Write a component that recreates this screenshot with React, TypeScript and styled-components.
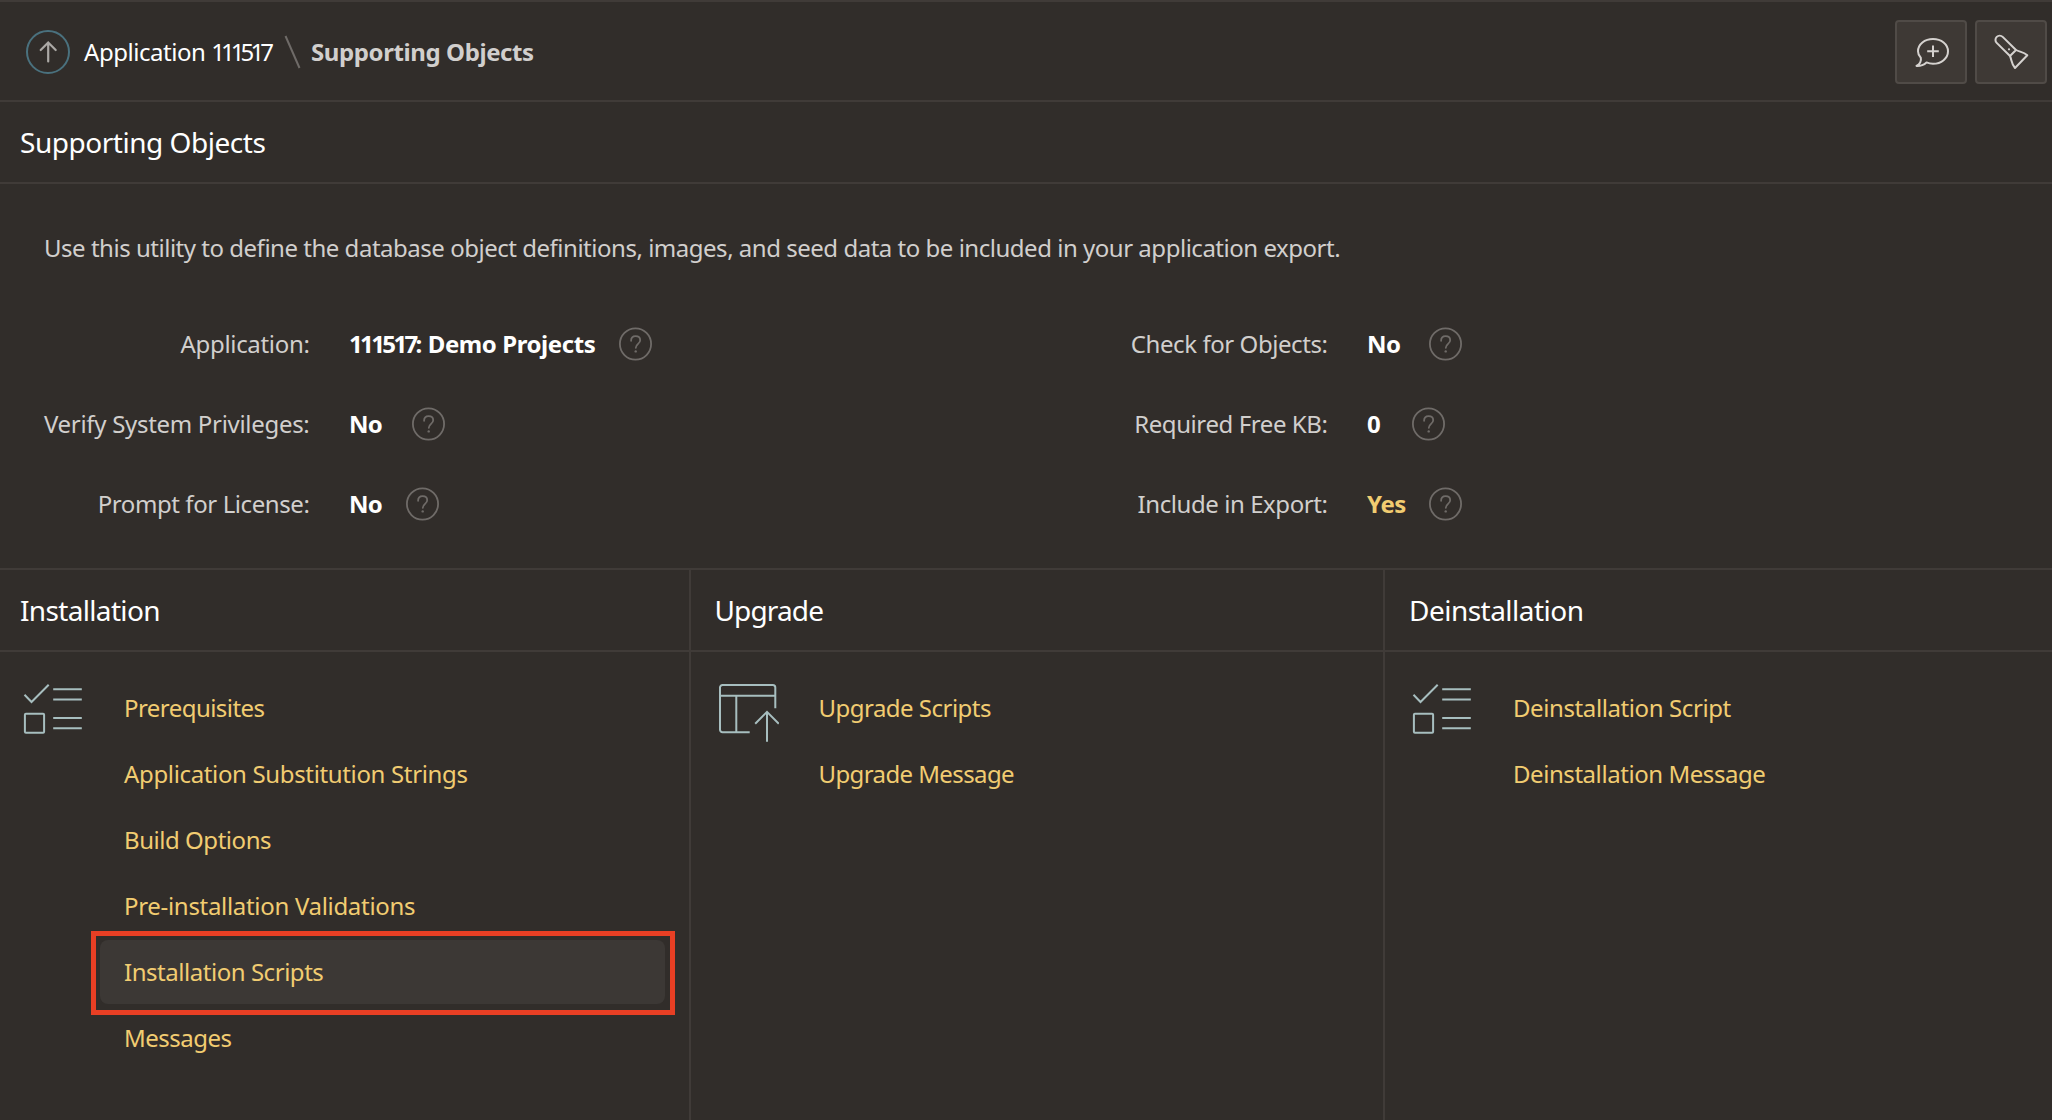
import React from "react";
import styled, { createGlobalStyle } from "styled-components";

const c = {
  bg: "#312d2a",
  line: "#403b38",
  text: "#d1cfcd",
  link: "#f1cc71",
  icon: "#a7bebf",
};

const Global = createGlobalStyle`
  * { box-sizing: border-box; }
  body { margin: 0; background: ${c.bg}; }
  ul, h1, h2, p, dl, dt, dd { margin: 0; padding: 0; }
`;

const Page = styled.div`
  width: 2052px;
  height: 1120px;
  overflow: hidden;
  display: flex;
  flex-direction: column;
  background: ${c.bg};
  color: ${c.text};
  font-family: "Noto Sans", "Open Sans", sans-serif;
  font-size: 24px;
  line-height: 32px;
  white-space: nowrap;
`;

const Tracked = styled.span<{ $ls?: number }>`
  letter-spacing: ${(p) => p.$ls ?? 0}px;
`;

const TopBar = styled.header`
  height: 102px;
  flex: none;
  border-top: 2px solid ${c.line};
  border-bottom: 2px solid ${c.line};
  display: flex;
  align-items: center;
  padding: 2px 5px 0 26px;
`;

const UpButton = styled.a`
  width: 44px;
  height: 44px;
  border: 2px solid #4a717e;
  border-radius: 50%;
  display: grid;
  place-items: center;
  margin-right: 14px;
`;

const Crumb = styled.span<{ $current?: boolean; $w: number; $ls: number }>`
  width: ${(p) => p.$w}px;
  letter-spacing: ${(p) => p.$ls}px;
  color: ${(p) => (p.$current ? c.text : "#fff")};
  font-weight: ${(p) => (p.$current ? 700 : 400)};
`;

const Slash = styled.svg`
  margin: 0 10px 0 9px;
`;

const Actions = styled.div`
  margin-left: auto;
  display: flex;
  gap: 8px;
`;

const ActionButton = styled.button`
  width: 72px;
  height: 64px;
  padding: 0;
  border: 2px solid #504b47;
  border-radius: 4px;
  background: #3e3935;
  display: grid;
  place-items: center;
`;

const Heading = styled.h2<{ $lead: number; $ls: number }>`
  height: 82px;
  flex: none;
  border-bottom: 2px solid ${c.line};
  padding: 0 0 0 ${(p) => p.$lead}px;
  display: flex;
  align-items: center;
  color: #fff;
  font-size: 28px;
  font-weight: 400;
  letter-spacing: ${(p) => p.$ls}px;
`;

const Summary = styled.section`
  height: 386px;
  flex: none;
  border-bottom: 2px solid ${c.line};
  padding: 48px 0 0 44px;
`;

const Intro = styled.p<{ $ls: number }>`
  letter-spacing: ${(p) => p.$ls}px;
`;

const Fields = styled.div`
  margin-top: 40px;
  display: grid;
  grid-template-columns: 265.5px 751px 267px 1fr;
  grid-auto-rows: 80px;
`;

const Label = styled.div`
  display: flex;
  align-items: center;
  justify-content: flex-end;
`;

const Value = styled.div<{ $yes?: boolean }>`
  display: flex;
  align-items: center;
  padding-left: 39.5px;
  font-weight: 700;
  color: ${(p) => (p.$yes ? c.link : "#fff")};
`;

const ValueText = styled.span<{ $w: number; $ls: number }>`
  width: ${(p) => p.$w}px;
  letter-spacing: ${(p) => p.$ls}px;
`;

const Columns = styled.main`
  flex: 1;
  display: grid;
  grid-template-columns: 691px 694px 1fr;
`;

const Column = styled.section`
  border-right: 2px solid ${c.line};
  &:last-child { border-right: 0; }
`;

const ColumnBody = styled.div<{ $lead: number }>`
  display: flex;
  padding: 24px 24px 0 ${(p) => p.$lead}px;
`;

const Glyph = styled.svg`
  flex: none;
  margin: 6px 16px 0 2px;
`;

const Links = styled.ul`
  flex: 1;
  list-style: none;
  display: flex;
  flex-direction: column;
  gap: 2px;
`;

const LinkRow = styled.li<{ $active?: boolean }>`
  position: relative;
  height: 64px;
  border-radius: 8px;
  padding: 0 24px 0;
  display: flex;
  align-items: center;
  color: ${c.link};
  background: ${(p) => (p.$active ? "#3c3835" : "transparent")};
`;

const Marker = styled.div`
  position: absolute;
  inset: -9px -10px -11px -9px;
  border: 5px solid #e83f24;
`;

const HelpIcon = () => (
  <svg width="34" height="34" viewBox="0 0 34 34" fill="none" stroke="#6f6b68">
    <circle cx="16.5" cy="17" r="15.6" strokeWidth="1.8" />
    <path
      d="M12.100 13.800c0-2.800 1.900-4.600 4.500-4.600 2.700 0 4.600 1.700 4.600 4.100 0 3.600-4.400 3.700-4.400 7.500"
      strokeWidth="1.8"
      strokeLinecap="round"
    />
    <circle cx="16.7" cy="24.4" r="1.2" fill="#6f6b68" stroke="none" />
  </svg>
);

const ChecklistIcon = () => (
  <Glyph width="62" height="64" viewBox="0 0 62 64" fill="none" stroke={c.icon} strokeWidth="2">
    <path d="M2.5 12.8 9.5 20 26.7 2.8M31.2 7.3h28.6M31.2 17.6h28.6M31.2 36h28.6M31.2 46.3h28.6" />
    <rect x="2.9" y="31.8" width="19.2" height="19" rx="1" />
  </Glyph>
);

const UpgradeIcon = () => (
  <Glyph width="62" height="64" viewBox="0 0 62 64" fill="none" stroke={c.icon} strokeWidth="2">
    <path d="M58.3 26.3V5.5A2.5 2.5 0 0 0 55.8 3H5.5A2.5 2.5 0 0 0 3 5.5v42.3a2.5 2.5 0 0 0 2.5 2.5h27.2M3 13.7h55.3M19.3 13.7v36.6M50 59.7V30M38.2 41.7 50 29.9 61.8 41.7" />
  </Glyph>
);

type Field = { label: string; lls: number; prefix?: string; value: string; w: number; ls: number };

const fields: Field[] = [
  { label: "Application:", lls: -0.33, prefix: "111517", value: ": Demo Projects", w: 270, ls: -0.42 },
  { label: "Check for Objects:", lls: -0.43, value: "No", w: 62, ls: -0.6 },
  { label: "Verify System Privileges:", lls: -0.3, value: "No", w: 63, ls: -0.8 },
  { label: "Required Free KB:", lls: -0.41, value: "0", w: 45, ls: 0 },
  { label: "Prompt for License:", lls: -0.41, value: "No", w: 57, ls: -0.8 },
  { label: "Include in Export:", lls: -0.43, value: "Yes", w: 62, ls: -0.4 },
];

type Group = {
  title: string;
  ls: number;
  lead: number;
  icon: React.ReactNode;
  links: { text: string; ls: number; active?: boolean }[];
};

const groups: Group[] = [
  {
    title: "Installation",
    ls: -0.66,
    lead: 20,
    icon: <ChecklistIcon />,
    links: [
      { text: "Prerequisites", ls: -0.55 },
      { text: "Application Substitution Strings", ls: -0.35 },
      { text: "Build Options", ls: -0.46 },
      { text: "Pre-installation Validations", ls: -0.31 },
      { text: "Installation Scripts", ls: -0.46, active: true },
      { text: "Messages", ls: -0.5 },
    ],
  },
  {
    title: "Upgrade",
    ls: -0.85,
    lead: 23.5,
    icon: <UpgradeIcon />,
    links: [
      { text: "Upgrade Scripts", ls: -0.52 },
      { text: "Upgrade Message", ls: -0.6 },
    ],
  },
  {
    title: "Deinstallation",
    ls: -0.52,
    lead: 24,
    icon: <ChecklistIcon />,
    links: [
      { text: "Deinstallation Script", ls: -0.4 },
      { text: "Deinstallation Message", ls: -0.44 },
    ],
  },
];

export default function App() {
  return (
    <>
      <Global />
      <Page>
        <TopBar>
          <UpButton>
            <svg width="20" height="24" viewBox="0 0 20 24" fill="none" stroke="#aba8a5" strokeWidth="2.2">
              <path d="M10.2 21.500V2.500M2.700 10 10.200 2.500l7.500 7.500" strokeLinecap="round" />
            </svg>
          </UpButton>
          <Crumb $w={191} $ls={-0.45}>
            Application <Tracked $ls={-3.95}>111517</Tracked>
          </Crumb>
          <Slash width="17" height="34" viewBox="0 0 17 34">
            <path d="M1.5 1 15.5 33" stroke="#6f6b68" strokeWidth="2" />
          </Slash>
          <Crumb $current $w={224} $ls={-0.4}>Supporting Objects</Crumb>
          <Actions>
            <ActionButton aria-label="Feedback">
              <svg width="40" height="40" viewBox="0 0 40 40" fill="none" stroke="#d5d2cf" strokeWidth="2" strokeLinejoin="round">
                <path d="M9.800 25.700C8 24 7 21.800 7 19.300 7 12.300 13.700 7 22 7s15 5.300 15 12.300-6.700 12.500-15 12.500c-2.300 0-4.500-.5-6.500-1.400-2.700 2.500-6 3.700-10 3.500 2.800-1.600 5-4.700 4.300-8.200Z" />
                <path d="M22 13.500v11.600M16.200 19.300h11.600" />
              </svg>
            </ActionButton>
            <ActionButton aria-label="Spotlight search">
              <svg width="40" height="40" viewBox="0 0 40 40" fill="none" stroke="#d5d2cf" strokeWidth="2" strokeLinejoin="round">
                <path d="M19 24 5.700 10.900A4.240 4.240 0 0 1 11.700 4.900L25 18Z" />
                <path d="M25 18C28.500 20 32.500 19.600 36.300 23.300L24 36C20.300 32 20.800 28 19 24" />
                <circle cx="18" cy="17.300" r="1.100" fill="#d5d2cf" stroke="none" />
              </svg>
            </ActionButton>
          </Actions>
        </TopBar>
        <Heading $lead={20} $ls={-0.47}>Supporting Objects</Heading>
        <Summary>
          <Intro $ls={-0.48}>
            Use this utility to define the database object definitions, images, and seed data to be included in your
            application export.
          </Intro>
          <Fields>
            {fields.map((f) => (
              <React.Fragment key={f.label}>
                <Label>
                  <Tracked $ls={f.lls}>{f.label}</Tracked>
                </Label>
                <Value $yes={f.value === "Yes"}>
                  <ValueText $w={f.w} $ls={f.ls}>
                    {f.prefix && <Tracked $ls={-2.63}>{f.prefix}</Tracked>}
                    {f.value}
                  </ValueText>
                  <HelpIcon />
                </Value>
              </React.Fragment>
            ))}
          </Fields>
        </Summary>
        <Columns>
          {groups.map((g) => (
            <Column key={g.title}>
              <Heading $lead={g.lead} $ls={g.ls}>{g.title}</Heading>
              <ColumnBody $lead={g.lead}>
                {g.icon}
                <Links>
                  {g.links.map((l) => (
                    <LinkRow key={l.text} $active={l.active}>
                      <Tracked $ls={l.ls}>{l.text}</Tracked>
                      {l.active && <Marker />}
                    </LinkRow>
                  ))}
                </Links>
              </ColumnBody>
            </Column>
          ))}
        </Columns>
      </Page>
    </>
  );
}
